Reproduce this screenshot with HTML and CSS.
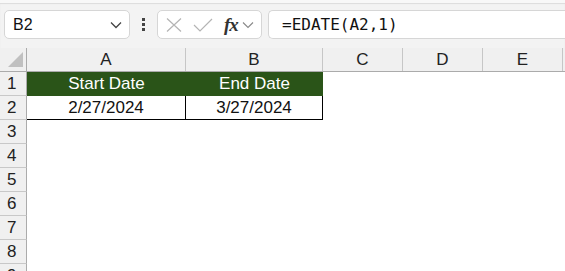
FILE: index.html
```html
<!DOCTYPE html>
<html>
<head>
  <title>EDATE</title>
  <link rel="stylesheet" href="styles.css">
</head>
<body>

<div class="toolbar">
  <div class="namebox">
    <span>B2</span>
    <svg width="12" height="8" viewBox="0 0 12 8"><path d="M1 1.5 L6 6.5 L11 1.5" fill="none" stroke="#444" stroke-width="1.3"/></svg>
  </div>
  <div class="dots"><i></i><i></i><i></i></div>
  <div class="fxbox">
    <svg width="16" height="14" viewBox="0 0 16 14"><path d="M1 0.5 L15 13.5 M15 0.5 L1 13.5" stroke="#b4b4b4" stroke-width="1.2" fill="none"/></svg>
    <svg width="20" height="14" viewBox="0 0 20 14"><path d="M1 7 L7 13 L19 1" stroke="#b4b4b4" stroke-width="1.2" fill="none"/></svg>
    <span class="fx">fx</span>
    <svg width="12" height="8" viewBox="0 0 12 8"><path d="M1 1.5 L6 6.5 L11 1.5" fill="none" stroke="#888" stroke-width="1.1"/></svg>
  </div>
  <div class="formula">=EDATE(A2,1)</div>
</div>

<div class="sheet">
  <div class="row head">
    <div class="rh corner"><div class="tri"></div></div>
    <div class="c a">A</div>
    <div class="c b">B</div>
    <div class="c">C</div>
    <div class="c">D</div>
    <div class="c">E</div>
  </div>
  <div class="row">
    <div class="rh">1</div>
    <div class="cell a title">Start Date</div>
    <div class="cell b title">End Date</div>
  </div>
  <div class="row">
    <div class="rh">2</div>
    <div class="cell a data">2/27/2024</div>
    <div class="cell b data last">3/27/2024</div>
  </div>
  <div class="row"><div class="rh">3</div></div>
  <div class="row"><div class="rh">4</div></div>
  <div class="row"><div class="rh">5</div></div>
  <div class="row"><div class="rh">6</div></div>
  <div class="row"><div class="rh">7</div></div>
  <div class="row"><div class="rh">8</div></div>
  <div class="row short"><div class="rh">9</div></div>
</div>

</body>
</html>
```

FILE: styles.css
```css
body {
  margin: 0;
  font-family: "Liberation Sans", Arial, sans-serif;
  background: white;
  overflow: hidden;
}
.toolbar {
  background: #f3f3f3;
  border-top: 3px solid #f8f8f8;
  box-shadow: inset 0 1px 1px #dcdcdc;
  display: flex;
  align-items: flex-start;
  padding-top: 7px;
  box-sizing: border-box;
  height: 48px;
  overflow: hidden;
}
.namebox, .fxbox, .formula {
  height: 29px;
  background: white;
  border: 1px solid #d6d6d6;
  border-radius: 5px;
  box-sizing: border-box;
  display: flex;
  align-items: center;
}
.namebox {
  margin-left: 4px;
  width: 126px;
  flex: none;
  padding: 0 7px 0 8px;
  justify-content: space-between;
  font-size: 16px;
  color: #111;
}
.dots {
  width: 27px;
  flex: none;
  height: 29px;
  display: flex;
  flex-direction: column;
  align-items: center;
  justify-content: center;
  gap: 2px;
}
.dots i {
  width: 3px;
  height: 3px;
  background: #444;
}
.fxbox {
  width: 105px;
  flex: none;
  padding-left: 8px;
  gap: 11px;
}
.fx {
  font-family: "Liberation Serif", serif;
  font-style: italic;
  font-weight: bold;
  font-size: 19px;
  color: #333;
  margin-right: -7px;
  letter-spacing: -1px;
}
.formula {
  margin-left: 6px;
  flex: 1;
  border-right: none;
  border-radius: 5px 0 0 5px;
  padding-left: 13px;
  font-family: "DejaVu Sans Mono", "Liberation Mono", monospace;
  font-size: 16px;
  color: #111;
}
.row {
  display: flex;
  height: 24px;
}
.row.short {
  height: 8px;
  overflow: hidden;
}
.rh {
  width: 27px;
  flex: none;
  background: #f0f0f0;
  border-right: 1px solid #ababab;
  border-bottom: 1px solid #c8c8c8;
  box-sizing: border-box;
  font-size: 17px;
  color: #222;
  padding-left: 7px;
  line-height: 23px;
}
.head {
  background: #f0f0f0;
  border-bottom: 1px solid #ababab;
  box-sizing: border-box;
}
.head .rh {
  border-bottom: none;
  position: relative;
}
.tri {
  position: absolute;
  right: 3px;
  bottom: 4px;
  width: 0;
  height: 0;
  border-left: 15px solid transparent;
  border-bottom: 15px solid #c0c0c0;
}
.c {
  width: 80px;
  flex: none;
  border-right: 1px solid #c6c6c6;
  text-align: center;
  font-size: 17px;
  line-height: 23px;
  color: #222;
  box-sizing: border-box;
}
.a { width: 159px; }
.b { width: 137px; }
.cell {
  flex: none;
  box-sizing: border-box;
  text-align: center;
  font-size: 17px;
  line-height: 23px;
}
.title {
  background: #2a5418;
  color: white;
}
.data {
  border-bottom: 1px solid #000;
  border-right: 1px solid #000;
  color: #111;
}
```
